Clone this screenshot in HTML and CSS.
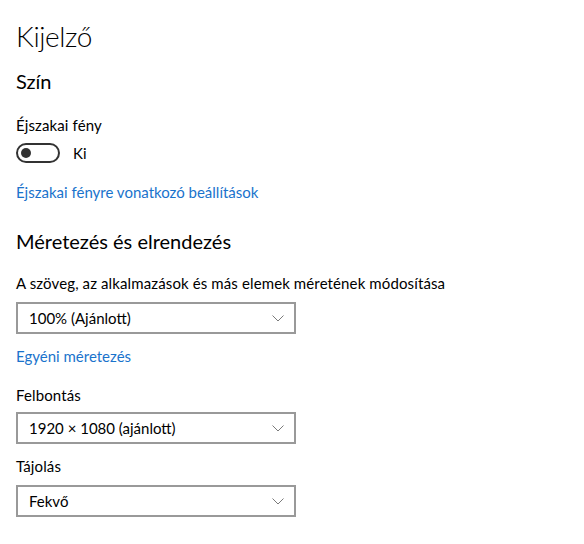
FILE: index.html
```html
<!DOCTYPE html>
<html lang="hu">
<head>
<meta charset="utf-8">
<link rel="stylesheet" href="styles.css">
</head>
<body>
<main class="page">
  <h1 class="title">Kijelző</h1>
  <h2 class="section s-color">Szín</h2>
  <div class="label l-night">Éjszakai fény</div>
  <div class="toggle-row">
    <span class="toggle"><span class="knob"></span></span>
    <span class="toggle-text">Ki</span>
  </div>
  <a class="link l-nightlink" href="#">Éjszakai fényre vonatkozó beállítások</a>
  <h2 class="section s-scale">Méretezés és elrendezés</h2>
  <div class="label l-scale">A szöveg, az alkalmazások és más elemek méretének módosítása</div>
  <div class="dropdown d-scale">
    <span class="dd-text">100% (Ajánlott)</span>
    <svg class="chev" width="12" height="7" viewBox="0 0 12 7"><polyline points="0.5,0.5 6,6 11.5,0.5" fill="none" stroke="#7a7a7a" stroke-width="1"/></svg>
  </div>
  <a class="link l-custom" href="#">Egyéni méretezés</a>
  <div class="label l-res">Felbontás</div>
  <div class="dropdown d-res">
    <span class="dd-text">1920 × 1080 (ajánlott)</span>
    <svg class="chev" width="12" height="7" viewBox="0 0 12 7"><polyline points="0.5,0.5 6,6 11.5,0.5" fill="none" stroke="#7a7a7a" stroke-width="1"/></svg>
  </div>
  <div class="label l-orient">Tájolás</div>
  <div class="dropdown d-orient">
    <span class="dd-text">Fekvő</span>
    <svg class="chev" width="12" height="7" viewBox="0 0 12 7"><polyline points="0.5,0.5 6,6 11.5,0.5" fill="none" stroke="#7a7a7a" stroke-width="1"/></svg>
  </div>
</main>
</body>
</html>
```
FILE: styles.css
```css
html, body {
  margin: 0;
  padding: 0;
  background: #ffffff;
}
body {
  font-family: "Lato", "Open Sans", sans-serif;
  color: #000000;
}
.page {
  display: flex;
  flex-direction: column;
  align-items: flex-start;
  padding: 16px 16px 0 16px;
}
.title {
  margin: 0;
  font-size: 28px;
  font-weight: 300;
  line-height: 40px;
  letter-spacing: -0.4px;
}
.section {
  margin: 0;
  font-size: 20px;
  font-weight: 400;
  line-height: 28px;
}
.s-color { margin-top: 11px; }
.s-scale { margin-top: 25px; }
.label {
  font-size: 15px;
  line-height: 20px;
  letter-spacing: 0.12px;
}
.l-night { margin-top: 20px; }
.l-scale { margin-top: 18px; }
.l-res { margin-top: 19px; }
.l-orient { margin-top: 12px; }
.toggle-row {
  margin-top: 8px;
  display: flex;
  align-items: center;
  height: 20px;
  font-size: 15px;
  line-height: 20px;
}
.toggle {
  box-sizing: border-box;
  width: 44px;
  height: 20px;
  border: 2px solid #333333;
  border-radius: 10px;
  display: flex;
  align-items: center;
  padding-left: 3px;
}
.knob {
  width: 10px;
  height: 10px;
  border-radius: 50%;
  background: #333333;
}
.toggle-text {
  margin-left: 13px;
}
.link {
  font-size: 15px;
  line-height: 20px;
  color: #1a73cc;
  text-decoration: none;
}
.l-nightlink { margin-top: 19px; }
.l-custom { margin-top: 12px; }
.dropdown {
  box-sizing: border-box;
  width: 280px;
  height: 32px;
  border: 2px solid #999999;
  display: flex;
  align-items: center;
  justify-content: space-between;
  padding: 0 10px 0 11px;
  font-size: 15px;
  line-height: 20px;
}
.chev {
  display: block;
}
.d-scale { margin-top: 9px; }
.d-res { margin-top: 7px; }
.d-orient { margin-top: 9px; }
```
